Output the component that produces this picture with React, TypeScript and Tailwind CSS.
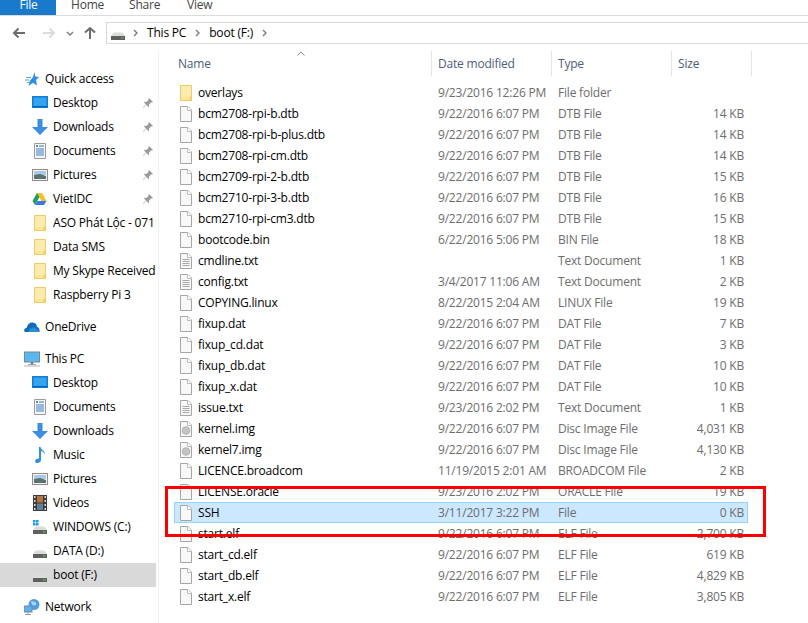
import type { ReactNode } from 'react';

type Entry = { name: string; date: string; type: string; size: string; icon?: 'folder' | 'text' | 'disc' };

const files: Entry[] = [
  { name: 'overlays', date: '9/23/2016 12:26 PM', type: 'File folder', size: '', icon: 'folder' },
  { name: 'bcm2708-rpi-b.dtb', date: '9/22/2016 6:07 PM', type: 'DTB File', size: '14 KB' },
  { name: 'bcm2708-rpi-b-plus.dtb', date: '9/22/2016 6:07 PM', type: 'DTB File', size: '14 KB' },
  { name: 'bcm2708-rpi-cm.dtb', date: '9/22/2016 6:07 PM', type: 'DTB File', size: '14 KB' },
  { name: 'bcm2709-rpi-2-b.dtb', date: '9/22/2016 6:07 PM', type: 'DTB File', size: '15 KB' },
  { name: 'bcm2710-rpi-3-b.dtb', date: '9/22/2016 6:07 PM', type: 'DTB File', size: '16 KB' },
  { name: 'bcm2710-rpi-cm3.dtb', date: '9/22/2016 6:07 PM', type: 'DTB File', size: '15 KB' },
  { name: 'bootcode.bin', date: '6/22/2016 5:06 PM', type: 'BIN File', size: '18 KB' },
  { name: 'cmdline.txt', date: '', type: 'Text Document', size: '1 KB', icon: 'text' },
  { name: 'config.txt', date: '3/4/2017 11:06 AM', type: 'Text Document', size: '2 KB', icon: 'text' },
  { name: 'COPYING.linux', date: '8/22/2015 2:04 AM', type: 'LINUX File', size: '19 KB' },
  { name: 'fixup.dat', date: '9/22/2016 6:07 PM', type: 'DAT File', size: '7 KB' },
  { name: 'fixup_cd.dat', date: '9/22/2016 6:07 PM', type: 'DAT File', size: '3 KB' },
  { name: 'fixup_db.dat', date: '9/22/2016 6:07 PM', type: 'DAT File', size: '10 KB' },
  { name: 'fixup_x.dat', date: '9/22/2016 6:07 PM', type: 'DAT File', size: '10 KB' },
  { name: 'issue.txt', date: '9/23/2016 2:02 PM', type: 'Text Document', size: '1 KB', icon: 'text' },
  { name: 'kernel.img', date: '9/22/2016 6:07 PM', type: 'Disc Image File', size: '4,031 KB', icon: 'disc' },
  { name: 'kernel7.img', date: '9/22/2016 6:07 PM', type: 'Disc Image File', size: '4,130 KB', icon: 'disc' },
  { name: 'LICENCE.broadcom', date: '11/19/2015 2:01 AM', type: 'BROADCOM File', size: '2 KB' },
  { name: 'LICENSE.oracle', date: '9/23/2016 2:02 PM', type: 'ORACLE File', size: '19 KB' },
  { name: 'SSH', date: '3/11/2017 3:22 PM', type: 'File', size: '0 KB' },
  { name: 'start.elf', date: '9/22/2016 6:07 PM', type: 'ELF File', size: '2,700 KB' },
  { name: 'start_cd.elf', date: '9/22/2016 6:07 PM', type: 'ELF File', size: '619 KB' },
  { name: 'start_db.elf', date: '9/22/2016 6:07 PM', type: 'ELF File', size: '4,829 KB' },
  { name: 'start_x.elf', date: '9/22/2016 6:07 PM', type: 'ELF File', size: '3,805 KB' },
];

function Svg({ children, w = 16, h = 16 }: { children: ReactNode; w?: number; h?: number }) {
  return (
    <svg width={w} height={h} viewBox={`0 0 ${w} ${h}`} className="shrink-0">
      {children}
    </svg>
  );
}

function FileGlyph({ kind }: { kind?: Entry['icon'] }) {
  if (kind === 'folder') return <FolderGlyph />;
  return (
    <Svg w={12} h={16}>
      <path d="M.5.5h7.500l3.500 3.500v11.500H.5z" fill="#f8f8f8" stroke="#a6a6a6" />
      <path d="M7.500.5v4h4" fill="#fff" stroke="#bcbcbc" />
      {kind === 'text' && <path d="M2.500 6.500h7M2.500 8.500h7M2.500 10.500h7M2.500 12.500h7" stroke="#a8a8a8" />}
      {kind === 'disc' && <circle cx="6" cy="9.500" r="3.800" fill="#c4c4c4" stroke="#b4b4b4" />}
    </Svg>
  );
}

function FolderGlyph() {
  return (
    <Svg w={12} h={16}>
      <path d="M.5.5h11v15H.5z" fill="#fde59a" stroke="#eccb6b" />
      <path d="M1 1h10v11H1z" fill="#fff0bd" opacity=".6" />
      <path d="M9.500 11.500h2v4h-2z" fill="#f5cf5f" />
    </Svg>
  );
}

function Desktop() {
  return (
    <Svg>
      <rect x="0" y="1" width="16" height="12" fill="#0f7fd6" />
      <rect x="1.500" y="2.500" width="13" height="8.500" fill="#35a4ef" />
      <rect x="1" y="11" width="14" height="1.200" fill="#0a63ad" />
    </Svg>
  );
}
function Down() {
  return (
    <Svg>
      <path d="M5.500 0h5v8H16l-8 8-8-8h5.500z" fill="#3b8ee0" />
    </Svg>
  );
}
function Docs() {
  return (
    <Svg w={12} h={16}>
      <path d="M.5.5h11v15H.5z" fill="#f5f6f8" stroke="#9a9a9a" />
      <path d="M5 3h5M2 6h8M2 8h8M2 10h8M2 12h8" stroke="#3a7fc0" />
      <path d="M2 2h2v2H2z" fill="#4a90d0" />
    </Svg>
  );
}
function Pics() {
  return (
    <Svg>
      <rect x=".5" y="2.500" width="15" height="11" fill="#f4f4f4" stroke="#8d8d8d" />
      <rect x="2" y="4" width="12" height="4" fill="#a8cbe8" />
      <path d="M2 8l6-1 6 2v3H2z" fill="#5c6f73" />
    </Svg>
  );
}
function Drive3() {
  return (
    <Svg>
      <path d="M5 2h5l4.500 8h-5z" fill="#f4c025" />
      <path d="M5 2L.5 10 3 14l4.500-8z" fill="#1e9e5a" />
      <path d="M3 14h9l2.500-4H5.500z" fill="#3b78e7" />
    </Svg>
  );
}
function Star() {
  return (
    <Svg w={14} h={14}>
      <path d="M9.500 0l.8 4.500 3.700.5-3 3 1 5.500-4-2.700L3.500 14l1.300-5L8 5z" fill="#2d8fdf" />
      <path d="M1 5.500h5M0 8h4.500M2 10.500h2.500" stroke="#5aa6e6" />
    </Svg>
  );
}
function Cloud() {
  return (
    <Svg h={12}>
      <path d="M1 11c-1.500-1-1-4 1.500-4C3.500 3 6 1 9 1.500 12 2 13 4 13 6c2 0 3 3 2.500 5z" fill="#0f6cbd" />
      <path d="M5 11c-1-2 1-4 3-4 1-1 4-1 4 1 2 0 3 1 3 3z" fill="#2a8ad4" />
    </Svg>
  );
}
function Monitor() {
  return (
    <Svg>
      <rect x=".5" y="1" width="15" height="10" fill="#5cb8ec" stroke="#6d8aa0" />
      <path d="M7 11h2v2H7zM4 13.500h8" stroke="#9aa5ad" />
      <path d="M0 15h16" stroke="#b0b0b0" />
    </Svg>
  );
}
function Music() {
  return (
    <Svg w={12} h={16}>
      <path d="M5 0h1.500c.5 3 5 4 4.500 8-.5-2-2-3.500-4-4v9c0 2-2 3-4 3s-2.500-2.500-1-3.500 2-1 3-.8z" fill="#2f8fe0" />
    </Svg>
  );
}
function Film() {
  return (
    <Svg w={14} h={16}>
      <rect width="14" height="16" fill="#3c3c3c" />
      <path d="M1 1h1.500v2H1zM1 5h1.500v2H1zM1 9h1.500v2H1zM1 13h1.500v2H1zM11.500 1H13v2h-1.500zM11.500 5H13v2h-1.500zM11.500 9H13v2h-1.500zM11.500 13H13v2h-1.500z" fill="#ddd" />
      <rect x="4" y="1" width="6" height="6.500" fill="#b8743a" />
      <rect x="4" y="8.500" width="6" height="6.500" fill="#5f7f9a" />
    </Svg>
  );
}
function Disk({ win }: { win?: boolean }) {
  return (
    <Svg w={14} h={16}>
      {win && <path d="M0 1h2.500v2.500H0zM3 1h2.500v2.500H3zM0 4h2.500v2.500H0zM3 4h2.500v2.500H3z" fill="#1c9be6" />}
      <path d="M2.500 7.500h9L14 11H0z" fill="#dcdcdc" />
      <rect y="11" width="14" height="4" fill="#5f5f5f" />
      <rect x="10" y="12.500" width="2.500" height="1" fill="#5fd35f" />
    </Svg>
  );
}
function Net() {
  return (
    <Svg>
      <circle cx="10" cy="5.500" r="5.500" fill="#4f9fe0" />
      <path d="M7 2c2 1 4 0 5 2s-2 3-4 2z" fill="#a9d6f5" />
      <rect x="0" y="7" width="8" height="6" fill="#5fb0e6" stroke="#6d8aa0" />
      <path d="M4 13v2M1 15.500h6" stroke="#8f9aa3" />
    </Svg>
  );
}
function Pin() {
  return (
    <svg width="10" height="10" viewBox="0 0 10 10" className="shrink-0">
      <path d="M6 0l4 4-1 .6-.7-.3L6 6.500 6.200 8.500 5.500 9 3.200 6.700 .6 9.800 0 9.400 3 6.500 1 4.400l.6-.6 1.900.2L5.700 1.600l-.3-.7z" fill="#9a9a9a" />
    </svg>
  );
}
function Chevron() {
  return (
    <svg width="6" height="8" viewBox="0 0 6 8" fill="none" stroke="#777" strokeWidth="1.300" className="shrink-0">
      <path d="M1 1l3 3-3 3" />
    </svg>
  );
}

function NavRow({ icon, label, indent, pin, active }: { icon: ReactNode; label: string; indent?: boolean; pin?: boolean; active?: boolean }) {
  return (
    <div className={`relative flex h-6 w-[156px] items-center overflow-hidden ${active ? 'bg-[#d9d9d9]' : ''} ${indent ? 'pl-8' : 'pl-6'}`}>
      <span className="flex w-4 shrink-0 justify-center">{icon}</span>
      <span className="ml-[5px] whitespace-nowrap text-black">{label}</span>
      {pin && (
        <span className="absolute right-[3px] top-[7px]">
          <Pin />
        </span>
      )}
    </div>
  );
}

function Sidebar() {
  return (
    <aside className="h-[572px] w-[159px] shrink-0 border-r border-[#f0f0f0] pt-4">
      <div className="mb-2">
        <NavRow icon={<Star />} label="Quick access" />
        <NavRow indent pin icon={<Desktop />} label="Desktop" />
        <NavRow indent pin icon={<Down />} label="Downloads" />
        <NavRow indent pin icon={<Docs />} label="Documents" />
        <NavRow indent pin icon={<Pics />} label="Pictures" />
        <NavRow indent pin icon={<Drive3 />} label="VietIDC" />
        <NavRow indent icon={<FolderGlyph />} label="ASO Phát Lộc - 0711" />
        <NavRow indent icon={<FolderGlyph />} label="Data SMS" />
        <NavRow indent icon={<FolderGlyph />} label="My Skype Received" />
        <NavRow indent icon={<FolderGlyph />} label="Raspberry Pi 3" />
      </div>
      <div className="mb-2">
        <NavRow icon={<Cloud />} label="OneDrive" />
      </div>
      <div className="mb-2">
        <NavRow icon={<Monitor />} label="This PC" />
        <NavRow indent icon={<Desktop />} label="Desktop" />
        <NavRow indent icon={<Docs />} label="Documents" />
        <NavRow indent icon={<Down />} label="Downloads" />
        <NavRow indent icon={<Music />} label="Music" />
        <NavRow indent icon={<Pics />} label="Pictures" />
        <NavRow indent icon={<Film />} label="Videos" />
        <NavRow indent icon={<Disk win />} label="WINDOWS (C:)" />
        <NavRow indent icon={<Disk />} label="DATA (D:)" />
        <NavRow indent active icon={<Disk />} label="boot (F:)" />
      </div>
      <NavRow icon={<Net />} label="Network" />
    </aside>
  );
}

function FileRow({ file }: { file: Entry }) {
  const selected = file.name === 'SSH';
  return (
    <div
      className={`grid h-[21px] w-[574px] grid-cols-[258px_120px_120px_76px] items-center border ${
        selected ? 'border-[#99d1ff] bg-[#cce8ff]' : 'border-transparent'
      }`}
    >
      <div className="flex items-center pl-[5px]">
        <FileGlyph kind={file.icon} />
        <span className="ml-[6px] text-black">{file.name}</span>
      </div>
      <span className="whitespace-nowrap pl-[5px] text-[#6d6d6d]">{file.date}</span>
      <span className="whitespace-nowrap pl-[5px] text-[#6d6d6d]">{file.type}</span>
      <span className="whitespace-nowrap pr-[5px] text-right text-[#6d6d6d]">{file.size}</span>
    </div>
  );
}

export default function App() {
  return (
    <div className="relative h-[623px] w-[808px] overflow-hidden bg-white font-['Open_Sans','Liberation_Sans',sans-serif] text-[12px] leading-4 tracking-[-0.2px]">
      <div className="flex h-4 items-start overflow-hidden border-b border-[#dadbdc] text-[#444]">
        <div className="flex h-[15px] w-14 justify-center bg-[#1979ca] pl-px text-white">
          <span className="-mt-[3px]">File</span>
        </div>
        <div className="-mt-[3px] ml-[15px] w-[43px]">Home</div>
        <div className="-mt-[3px] ml-[15px] w-[37px]">Share</div>
        <div className="-mt-[3px] ml-[21px]">View</div>
      </div>

      <div className="flex h-[35px] items-start pt-[6px]">
        <div className="flex h-[22px] w-[106px] shrink-0 items-center pl-3">
          <svg width="14" height="12" viewBox="0 0 14 12" fill="none" stroke="#6d6d6d" strokeWidth="2">
            <path d="M13 6H2M6.500 1.500L2 6l4.500 4.500" />
          </svg>
          <svg width="14" height="12" viewBox="0 0 14 12" fill="none" stroke="#dcdcdc" strokeWidth="2" className="ml-4">
            <path d="M1 6h11M7.500 1.500L12 6l-4.500 4.500" />
          </svg>
          <svg width="8" height="5" viewBox="0 0 8 5" fill="none" stroke="#808080" strokeWidth="1.500" className="ml-[10px]">
            <path d="M1 1l3 3 3-3" />
          </svg>
          <svg width="14" height="14" viewBox="0 0 14 14" fill="none" stroke="#6d6d6d" strokeWidth="2" className="ml-[9px]">
            <path d="M7 13V2M2 6.500L7 2l5 4.500" />
          </svg>
        </div>
        <div className="flex h-[22px] flex-1 items-center border-y border-l border-[#d9d9d9] pl-[4px] text-black">
          <Disk />
          <span className="ml-[8px]">
            <Chevron />
          </span>
          <span className="ml-[8px]">This PC</span>
          <span className="ml-[9px]">
            <Chevron />
          </span>
          <span className="ml-[8px]">boot (F:)</span>
          <span className="ml-[9px]">
            <Chevron />
          </span>
        </div>
      </div>

      <div className="flex">
        <Sidebar />
        <main className="pl-[15px]">
          <div className="relative grid h-[25px] w-[578px] grid-cols-[258px_120px_120px_80px] text-[#4c607a]">
            <div className="flex items-center border-r border-[#e5e5e5] pl-[4px]">Name</div>
            <div className="flex items-center border-r border-[#e5e5e5] pl-[6px]">Date modified</div>
            <div className="flex items-center border-r border-[#e5e5e5] pl-[6px]">Type</div>
            <div className="flex items-center border-r border-[#e5e5e5] pl-[6px]">Size</div>
            <svg width="8" height="5" viewBox="0 0 8 5" fill="none" stroke="#8a8a8a" className="absolute left-[123px] top-0">
              <path d="M.5 4.500L4 1l3.500 3.500" />
            </svg>
          </div>
          <div className="pt-[6px]">
            {files.map((file) => (
              <FileRow key={file.name} file={file} />
            ))}
          </div>
        </main>
      </div>

      <div className="absolute left-[165px] top-[486px] h-[51px] w-[601px] border-[3px] border-[#ff0000]" />
    </div>
  );
}
